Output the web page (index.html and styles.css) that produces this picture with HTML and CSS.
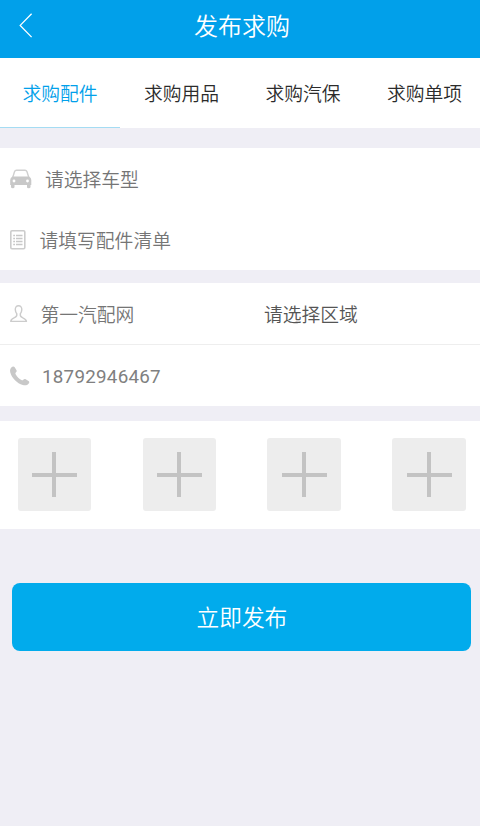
FILE: index.html
```html
<!DOCTYPE html>
<html lang="zh-CN">
<head>
    <meta charset="UTF-8">
    <meta name="viewport" content="width=device-width, initial-scale=1">
    <title>发布求购</title>
    <link rel="stylesheet" href="styles.css">
</head>
<body>
    <header class="header">
        <a href="#" class="back" aria-label="返回">
            <svg width="14" height="25" viewBox="0 0 14 25"><path d="M12.6 .7 1.2 12.4 12.6 24.1" fill="none" stroke="#fff" stroke-width="1.3"/></svg>
        </a>
        <h1 class="title">发布求购</h1>
    </header>

    <nav class="tabs">
        <a href="#" class="tab active">求购配件</a>
        <a href="#" class="tab">求购用品</a>
        <a href="#" class="tab">求购汽保</a>
        <a href="#" class="tab">求购单项</a>
    </nav>

    <section class="panel">
        <div class="row">
            <svg class="icon icon-car" width="22" height="20" viewBox="0 0 22 20">
                <path d="M2.700 8.500 4.500 2.700Q5 1.200 6.500 1.200H15Q16.500 1.200 17 2.700L18.800 8.500" fill="none" stroke="#d0d0d0" stroke-width="1.400"/>
                <path fill="#c8c8c8" d="M2.500 7.500H19Q21.300 8.500 21.300 11V16H20.500V18Q20.500 19.300 18.700 19.300T17 18V16H4.500V18Q4.500 19.300 2.800 19.300T1 18V16H.2V11Q.2 8.500 2.500 7.500Z"/>
                <circle cx="4" cy="12" r="1.400" fill="#fff"/>
                <circle cx="17.500" cy="12" r="1.400" fill="#fff"/>
            </svg>
            <span class="field">请选择车型</span>
        </div>
        <div class="row">
            <svg class="icon icon-list" width="16" height="20" viewBox="0 0 16 20">
                <rect x=".8" y=".8" width="14" height="18" rx="1.200" fill="none" stroke="#ccc" stroke-width="1.600"/>
                <path d="M3.200 5.500H5M6 5.500H12.500M3.200 8.500H5M6 8.500H12.500M3.200 11.500H5M6 11.500H12.500M3.200 14.500H5M6 14.500H12.500" stroke="#c8c8c8" stroke-width="1.400"/>
            </svg>
            <span class="field">请填写配件清单</span>
        </div>
    </section>

    <section class="panel contact">
        <div class="row">
            <svg class="icon icon-user" width="18" height="18" viewBox="0 0 18 18">
                <path d="M8.500 .8C6.300 .8 5.200 2.300 5.300 4.600C5.400 6.400 6 7.800 6.800 8.800C7.200 11 6.500 11.800 4.500 12.700C2.200 13.700 .8 14.300 .8 16.400H16.400C16.400 14.300 14.800 13.700 12.500 12.700C10.500 11.800 9.900 11 10.300 8.800C11.100 7.800 11.700 6.400 11.800 4.600C11.900 2.300 10.700 .8 8.500 .8Z" fill="none" stroke="#ccc" stroke-width="1.400"/>
            </svg>
            <span class="field name">第一汽配网</span>
            <span class="field area">请选择区域</span>
        </div>
        <div class="row">
            <svg class="icon icon-phone" width="20" height="20" viewBox="0 0 20 20">
                <path fill="#c8c8c8" d="M1.300 1.500C2.700 .1 3.900 .1 4.700 1.300L6.500 4.200C7 5.200 6.600 5.900 5.800 6.600C5.200 7.200 5.300 7.600 5.800 8.500C7.200 11 9 12.800 11.400 14C12.300 14.500 12.800 14.500 13.300 13.800C14 12.900 14.800 12.700 15.700 13.200L18.500 15C19.500 15.700 19.500 16.700 18.500 17.800C17.200 19.400 15.200 19.700 12.800 19C7 17.100 2 12.200 .3 6.400C-.3 4.300 .1 2.700 1.300 1.500Z"/>
            </svg>
            <span class="field phone">18792946467</span>
        </div>
    </section>

    <section class="panel photos">
        <button class="add" aria-label="添加图片"></button>
        <button class="add" aria-label="添加图片"></button>
        <button class="add" aria-label="添加图片"></button>
        <button class="add" aria-label="添加图片"></button>
    </section>

    <button class="submit">立即发布</button>
</body>
</html>
```
FILE: styles.css
```css
* {
    box-sizing: border-box;
}

body {
    margin: 0;
    min-height: 826px;
    overflow-x: hidden;
    background: #efeef5;
    font-family: Roboto, "Noto Sans CJK SC", sans-serif;
    font-size: 18.8px;
    font-weight: 350;
    color: #757575;
}

a {
    color: inherit;
    text-decoration: none;
}

button {
    border: 0;
    padding: 0;
    font-family: inherit;
    font-weight: inherit;
}

.header {
    display: flex;
    height: 58px;
    padding: 13px 0 0 19px;
    background: #01a0ea;
    color: #fff;
}

.back {
    width: 14px;
    height: 25px;
}

.back svg {
    display: block;
}

.title {
    flex: 1;
    margin: 0;
    padding-right: 29px;
    font-size: 24px;
    font-weight: inherit;
    line-height: 28px;
    text-align: center;
}

.tabs {
    display: flex;
    gap: 1.5px;
    height: 70px;
    margin-bottom: 20px;
    overflow: hidden;
    background: #fff;
    color: #2b2b2b;
}

.tab {
    flex: 0 0 120px;
    line-height: 74px;
    text-align: center;
}

.tab.active {
    color: #01a0ea;
    border-bottom: 1px solid #a5dcf3;
}

.panel {
    background: #fff;
}

.row {
    display: flex;
    align-items: center;
    height: 61px;
    padding-left: 10px;
}

.icon {
    flex: none;
}

.icon-car {
    margin-right: 13px;
}

.icon-list {
    margin-right: 13.5px;
}

.icon-user {
    margin-right: 12.5px;
}

.icon-phone {
    margin-right: 12px;
}

.contact {
    margin: 13px 0 15px;
}

.contact .row + .row {
    height: 62px;
    border-top: 1px solid #eee;
}

.name {
    width: 223.5px;
}

.area {
    color: #555;
}

.phone {
    padding-top: 2px;
    font-weight: 400;
    letter-spacing: .25px;
    color: #808080;
}

.photos {
    display: flex;
    justify-content: space-between;
    height: 108px;
    padding: 17px 14.2px 0 17.7px;
}

.add {
    width: 73.5px;
    height: 73px;
    border-radius: 3px;
    background:
        linear-gradient(#c3c3c3, #c3c3c3) center / 45px 4px no-repeat,
        linear-gradient(#c3c3c3, #c3c3c3) center / 4px 45px no-repeat,
        #ededed;
}

.submit {
    display: block;
    width: 459px;
    height: 68px;
    margin: 54px 0 0 12.4px;
    padding-top: 3px;
    border-radius: 8px;
    background: #01abec;
    color: #fff;
    font-size: 22.7px;
    line-height: 65px;
}
```
